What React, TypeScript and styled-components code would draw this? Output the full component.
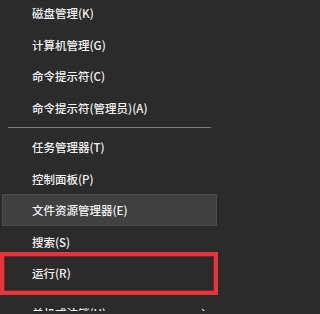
import React from 'react';
import styled, { createGlobalStyle } from 'styled-components';

const GlobalStyle = createGlobalStyle`
  html, body {
    margin: 0;
    padding: 0;
    background: #2b2b2b;
    overflow: hidden;
  }
`;

const Menu = styled.div`
  width: 222px;
  height: 314px;
  display: flex;
  flex-direction: column;
  margin-top: -2.75px;
  background: #2b2b2b;
  font-family: 'Noto Sans CJK SC', 'Noto Sans', sans-serif;
`;

const Item = styled.div<{ $hover?: boolean; $marked?: boolean }>`
  position: relative;
  flex: 0 0 31.5px;
  display: flex;
  align-items: center;
  margin: 0 5px 0 2px;
  padding: 0 9px 0 30px;
  font-size: 11.5px;
  font-weight: 500;
  color: #f2f2f2;
  white-space: nowrap;
  background: ${(p) => (p.$hover ? '#414141' : 'transparent')};
  box-shadow: ${(p) => (p.$hover ? 'inset 0 0 0 1px #4b4b4b' : 'none')};

  ${(p) =>
    p.$marked &&
    `
    &::after {
      content: '';
      position: absolute;
      left: -2px;
      right: -1px;
      top: -5px;
      bottom: -6px;
      border: 4px solid #e6363c;
      box-shadow: inset 0 0 0 1px #8a1c20;
      pointer-events: none;
    }
  `}
`;

const Label = styled.span`
  flex: 1;
`;

const Separator = styled.div`
  flex: 0 0 8px;
  display: flex;
  align-items: center;
  margin: 0 11px 0 8px;

  &::before {
    content: '';
    flex: 1;
    height: 1px;
    background: #7a7a7a;
  }
`;

const Chevron = () => (
  <svg width="7" height="10" viewBox="0 0 7 10">
    <polyline points="1,1 5.5,5 1,9" fill="none" stroke="#d8d8d8" strokeWidth="1.1" />
  </svg>
);

type Entry = { label: string; hover?: boolean; marked?: boolean; sub?: boolean } | 'sep';

const entries: Entry[] = [
  { label: '磁盘管理(K)' },
  { label: '计算机管理(G)' },
  { label: '命令提示符(C)' },
  { label: '命令提示符(管理员)(A)' },
  'sep',
  { label: '任务管理器(T)' },
  { label: '控制面板(P)' },
  { label: '文件资源管理器(E)', hover: true },
  { label: '搜索(S)' },
  { label: '运行(R)', marked: true },
  'sep',
  { label: '关机或注销(U)', sub: true },
];

export default function App() {
  return (
    <>
      <GlobalStyle />
      <Menu>
        {entries.map((e, i) =>
          e === 'sep' ? (
            <Separator key={i} />
          ) : (
            <Item key={i} $hover={e.hover} $marked={e.marked}>
              <Label>{e.label}</Label>
              {e.sub && <Chevron />}
            </Item>
          )
        )}
      </Menu>
    </>
  );
}
